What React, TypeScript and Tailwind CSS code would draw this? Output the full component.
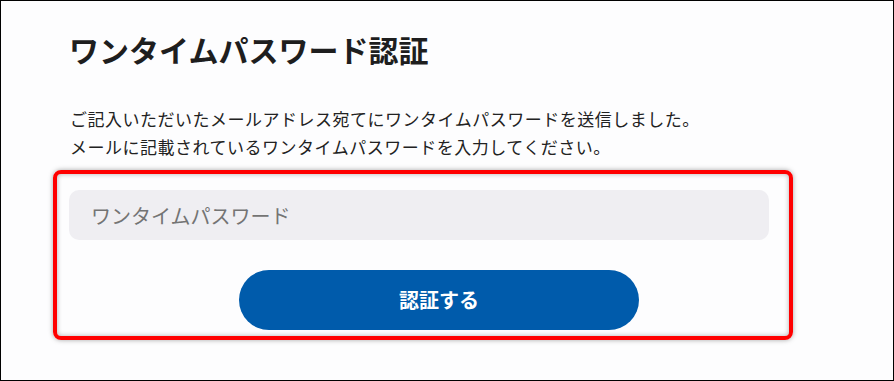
export default function App() {
  return (
    <div
      className="w-[894px] h-[381px] border border-black bg-[#fdfdfe] pl-[52px] pt-[28px] box-border overflow-hidden"
      style={{ fontFamily: '"Noto Sans CJK JP", "Noto Sans", sans-serif' }}
    >
      <h1 className="pl-[16px] text-[30px] leading-[40px] font-bold text-[#1e1e1e]">
        ワンタイムパスワード認証
      </h1>
      <p className="mt-[36px] pl-[17px] text-[17px] leading-[28px] tracking-[0.5px] text-[#222222]">
        ご記入いただいたメールアドレス宛てにワンタイムパスワードを送信しました。
        <br />
        メールに記載されているワンタイムパスワードを入力してください。
      </p>
      <div className="mt-[9px] w-[740px] h-[170px] border-[4px] border-[#ff0000] rounded-[8px] pl-[12px] pt-[16px] box-border shadow-[0_0_5px_rgba(0,0,0,0.35),inset_0_0_5px_rgba(0,0,0,0.3)]">
        <input
          type="text"
          placeholder="ワンタイムパスワード"
          className="block w-[700px] h-[50px] rounded-[10px] bg-[#efeef2] px-[22px] text-[20px] text-[#333] placeholder:text-[#747474] outline-none"
        />
        <button className="mt-[30px] ml-[170px] w-[400px] h-[60px] rounded-full bg-[#005bab] text-white text-[20px] font-bold flex items-center justify-center">
          認証する
        </button>
      </div>
    </div>
  );
}
